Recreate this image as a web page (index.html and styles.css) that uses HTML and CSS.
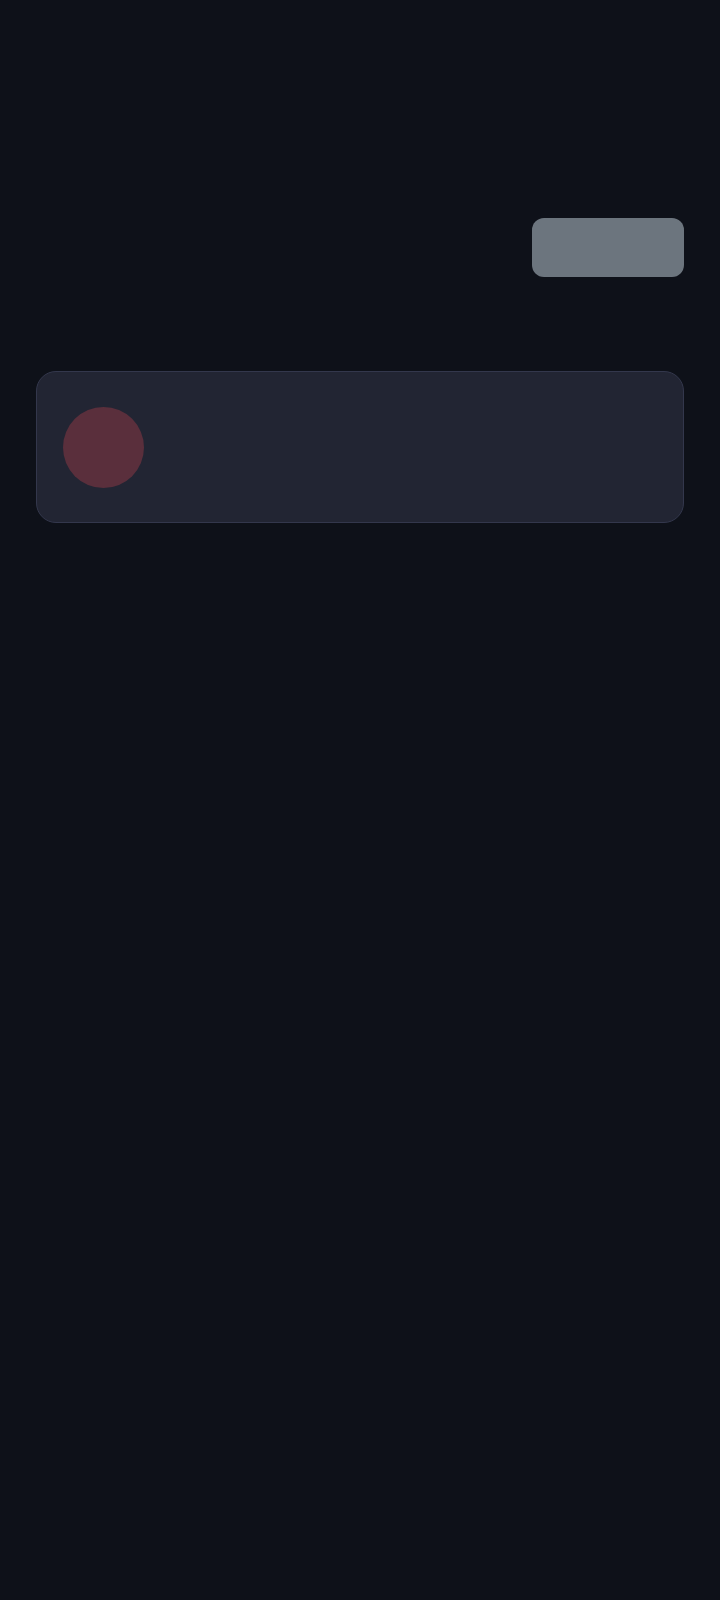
FILE: index.html
```html
<!DOCTYPE html>
<html lang="en">
<head>
<meta charset="utf-8">
<title>Page</title>
<link rel="stylesheet" href="styles.css">
</head>
<body>
<main class="page">
  <div class="toolbar">
    <div class="btn-skeleton"></div>
  </div>
  <section class="card">
    <div class="avatar"></div>
  </section>
</main>
</body>
</html>
```
FILE: styles.css
```css
html, body {
  margin: 0;
  padding: 0;
  background: #0e1119;
  font-family: "Inter", "Liberation Sans", sans-serif;
}
.page {
  min-height: 1600px;
  box-sizing: border-box;
  padding: 218px 36px 0 36px;
  display: flex;
  flex-direction: column;
}
.toolbar {
  display: flex;
  justify-content: flex-end;
}
.btn-skeleton {
  width: 152px;
  height: 59px;
  border-radius: 12px;
  background: #6c757e;
}
.card {
  margin-top: 94px;
  box-sizing: border-box;
  height: 152px;
  border: 1px solid #33374c;
  border-radius: 20px;
  background: #222533;
  display: flex;
  align-items: center;
  padding: 0 26px;
}
.avatar {
  width: 81px;
  height: 81px;
  border-radius: 50%;
  background: #5a2f3c;
}
```
